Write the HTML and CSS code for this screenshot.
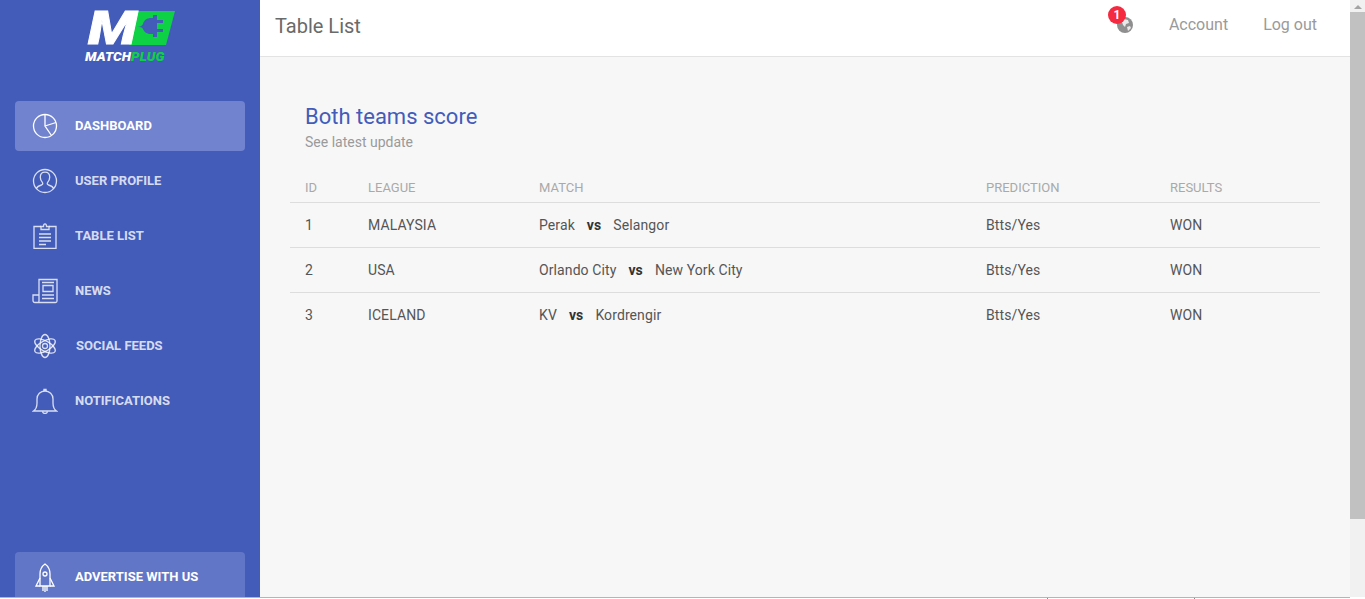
FILE: index.html
```html
<!DOCTYPE html>
<html lang="en">
<head>
<meta charset="utf-8">
<title>Table List</title>
<link rel="stylesheet" href="styles.css">
</head>
<body>
<div class="page">
  <div class="app">
    <aside class="sidebar">
      <div class="logo">
        <svg width="100" height="56" viewBox="0 0 100 56">
          <polygon points="58,11 95,11 86,45 49,45" fill="#0ed145"/>
          <path d="M57 27c3 0 5-1 6-3c1-4 4-6 8-6h2v-3h4v5h6v3h-6v6h6v3h-6v5h-4v-3h-2c-4 0-7-2-8-5c-1-2-3-2-6-2z" fill="#435cba"/>
          <text class="logo-m" x="8" y="44" textLength="49" lengthAdjust="spacingAndGlyphs">M</text>
        </svg>
        <div class="logo-name">MATCH<span class="logo-plug">PLUG</span></div>
      </div>
      <nav class="nav">
        <a class="nav-item active">
          <svg class="icon" viewBox="0 0 26 26"><circle cx="13" cy="13" r="11.500"/><path d="M13 1.500V13l6.500 9.500M13 13l11-3.500"/></svg>
          <span>DASHBOARD</span>
        </a>
        <a class="nav-item">
          <svg class="icon" viewBox="0 0 26 26"><circle cx="13" cy="13" r="11.500"/><path d="M4.500 20.500c1-2.500 3-3 5-3.500 1.300-.4 1.500-1.300 1-2.300-1.400-1.700-2.200-3.500-2.200-5.500 0-3 2-5 4.700-5s4.700 2 4.700 5c0 2-.8 3.800-2.200 5.500-.5 1-.3 1.900 1 2.300 2 .5 4 1 5 3.500"/></svg>
          <span>USER PROFILE</span>
        </a>
        <a class="nav-item">
          <svg class="icon" viewBox="0 0 26 26"><path d="M9 3.500H2v22h22v-22h-7"/><path d="M9 6.500h8V3.500h-2.500C14.500 2 14 .8 13 .8s-1.500 1.200-1.500 2.700H9z"/><path d="M7 11h12M7 14.500h12M7 18h12M7 21.500h7"/></svg>
          <span>TABLE LIST</span>
        </a>
        <a class="nav-item">
          <svg class="icon" viewBox="0 0 26 26"><path d="M7 17V1.500h18V23c0 1-.5 1.500-1.500 1.500H3c-1.200 0-2-.8-2-2V17h6v6c0 1-.7 1.500-1.500 1.500"/><path d="M10 4.500h12M11 7.500h10v6H11zM10 17h12M10 20.500h12"/></svg>
          <span>NEWS</span>
        </a>
        <a class="nav-item">
          <svg class="icon" viewBox="0 0 26 26"><ellipse cx="13" cy="13" rx="5" ry="11.500"/><ellipse cx="13" cy="13" rx="5" ry="11.500" transform="rotate(60 13 13)"/><ellipse cx="13" cy="13" rx="5" ry="11.500" transform="rotate(-60 13 13)"/><circle cx="13" cy="13" r="2.500"/></svg>
          <span class="shift">SOCIAL FEEDS</span>
        </a>
        <a class="nav-item">
          <svg class="icon" viewBox="0 0 26 26"><path d="M1.500 23c3-2 3.500-4 3.500-8v-4c0-4.500 3.500-8 8-8s8 3.500 8 8v4c0 4 .5 6 3.500 8z"/><path d="M12 3V1.500h2V3M10.500 23.500c.4 1.500 1.300 2 2.500 2s2.100-.5 2.500-2"/></svg>
          <span>NOTIFICATIONS</span>
        </a>
      </nav>
      <a class="nav-item advertise">
        <svg class="icon rocket" viewBox="0 0 26 32"><path d="M13 3c3.500 2.500 5 6 5 10v12H8V13c0-4 1.500-7.500 5-10z"/><circle cx="13" cy="13" r="2"/><path d="M8 17l-4 8h4M18 17l4 8h-4M11 25v5M13 25v6M15 25v5"/></svg>
        <span>ADVERTISE WITH US</span>
      </a>
    </aside>
    <div class="main">
      <header class="topbar">
        <h1 class="page-title">Table List</h1>
        <div class="top-links">
          <div class="globe-wrap">
            <svg class="globe" viewBox="0 0 16 16"><circle cx="8" cy="8" r="8" fill="#8f8f8f"/><path d="M7 2l4 1 1 3-3 1-1 3-2-2-1-3zM10 10l3-1 1 2-3 3z" fill="#e9e9e9"/></svg>
            <span class="badge">1</span>
          </div>
          <a class="top-link">Account</a>
          <a class="top-link">Log out</a>
        </div>
      </header>
      <main class="content">
        <div class="card-head">
          <h2 class="card-title">Both teams score</h2>
          <p class="card-sub">See latest update</p>
        </div>
        <table class="table">
          <thead>
            <tr><th class="c-id">ID</th><th class="c-league">League</th><th class="c-match">Match</th><th class="c-pred">Prediction</th><th>Results</th></tr>
          </thead>
          <tbody>
            <tr><td>1</td><td>MALAYSIA</td><td><div class="match"><span>Perak</span><b>vs</b><span>Selangor</span></div></td><td>Btts/Yes</td><td>WON</td></tr>
            <tr><td>2</td><td>USA</td><td><div class="match"><span>Orlando City</span><b>vs</b><span>New York City</span></div></td><td>Btts/Yes</td><td>WON</td></tr>
            <tr><td>3</td><td>ICELAND</td><td><div class="match"><span>KV</span><b>vs</b><span>Kordrengir</span></div></td><td>Btts/Yes</td><td>WON</td></tr>
          </tbody>
        </table>
      </main>
    </div>
    <div class="scrollbar">
      <div class="sb-arrow"></div>
      <div class="sb-thumb"></div>
    </div>
  </div>
  <div class="bottom-edge">
    <span class="tick"></span>
    <span class="tick"></span>
  </div>
</div>
</body>
</html>
```

FILE: styles.css
```css
* { box-sizing: border-box; }
html, body { margin: 0; height: 599px; overflow: hidden; background: #fff; }
body { font-family: Roboto, "Liberation Sans", sans-serif; color: #444; }
.page { display: flex; flex-direction: column; height: 599px; }
.app { display: flex; height: 597px; flex: none; }

.sidebar { width: 260px; flex: none; background: #435cba; display: flex; flex-direction: column; padding: 0 15px; overflow: hidden; }
.logo { height: 101px; flex: none; margin: 0 -15px; position: relative; }
.logo svg { display: block; margin-left: 80px; }
.logo-m { font: italic 900 46px Roboto, sans-serif; fill: #fff; stroke: #fff; stroke-width: .8px; }
.logo-name { position: absolute; left: 85px; top: 49px; font: italic 900 13.5px/14px Roboto, sans-serif; color: #fff; letter-spacing: .1px; }
.logo-plug { color: #0ed145; }

.nav { display: flex; flex-direction: column; gap: 5px; }
.nav-item { display: flex; align-items: center; flex: none; height: 50px; border-radius: 4px; padding-left: 17px; gap: 17px; font-size: 13px; font-weight: 700; color: rgba(255,255,255,.8); }
.nav-item span { padding-bottom: 2px; }
.nav-item.active { background: #7183ce; color: #fff; }
.icon { width: 26px; height: 26px; flex: none; fill: none; stroke: currentColor; stroke-width: 1.3; }
.shift { margin-left: 1px; }
.advertise { margin-top: auto; margin-bottom: -5px; background: #6276c8; color: #fff; }
.advertise .rocket { height: 32px; }

.main { flex: 1; min-width: 0; display: flex; flex-direction: column; background: #f7f7f7; }
.topbar { height: 57px; flex: none; background: #fff; border-bottom: 1px solid #e3e3e3; display: flex; align-items: center; justify-content: space-between; padding: 0 33px 8px 15px; }
.page-title { margin: 0; padding-top: 4px; font-size: 20px; font-weight: 400; color: #6a6a6a; }
.top-links { display: flex; align-items: center; gap: 35px; }
.top-link { font-size: 16px; color: #9a9a9a; }
.globe-wrap { position: relative; width: 16px; height: 16px; margin: 2px 1px 0 0; }
.globe { display: block; width: 16px; height: 16px; }
.badge { position: absolute; left: -9px; top: -11px; width: 18px; height: 18px; border-radius: 50%; background: #f5293f; color: #fff; font-size: 12px; font-weight: 700; line-height: 18px; text-align: center; }

.content { padding: 46px 30px 0; }
.card-head { padding: 0 15px; }
.card-title { margin: 0; font-size: 22px; line-height: 28px; font-weight: 400; color: #435cba; }
.card-sub { margin: 1px 0 0; font-size: 14px; line-height: 20px; color: #9a9a9a; }
.table { width: 100%; margin-top: 21px; border-collapse: collapse; table-layout: fixed; font-size: 14px; }
.table th { height: 29px; padding: 0 0 0 15px; text-align: left; font-size: 13px; font-weight: 400; color: #a9a9a9; text-transform: uppercase; border-bottom: 1px solid #ddd; }
.table td { height: 45px; padding: 0 0 0 15px; color: #555; letter-spacing: .1px; border-bottom: 1px solid #ddd; }
.table tbody tr:last-child td { border-bottom: 0; }
.c-id { width: 63px; }
.c-league { width: 171px; }
.c-match { width: 447px; }
.c-pred { width: 184px; }
.match { display: flex; gap: 12px; }
.match b { font-weight: 700; color: #333; }

.scrollbar { width: 15px; flex: none; background: #f1f1f1; display: flex; flex-direction: column; align-items: center; }
.sb-arrow { width: 0; height: 0; margin: 5px 0 3px; border-left: 4px solid transparent; border-right: 4px solid transparent; border-bottom: 4px solid #a3a3a3; }
.sb-thumb { width: 15px; height: 507px; background: #c1c1c1; }

.bottom-edge { height: 2px; width: 1350px; flex: none; display: flex; gap: 146px; padding-left: 1047px; border-top: 1px solid #b5b5b5; }
.tick { width: 1px; height: 1px; background: #888; }
```
